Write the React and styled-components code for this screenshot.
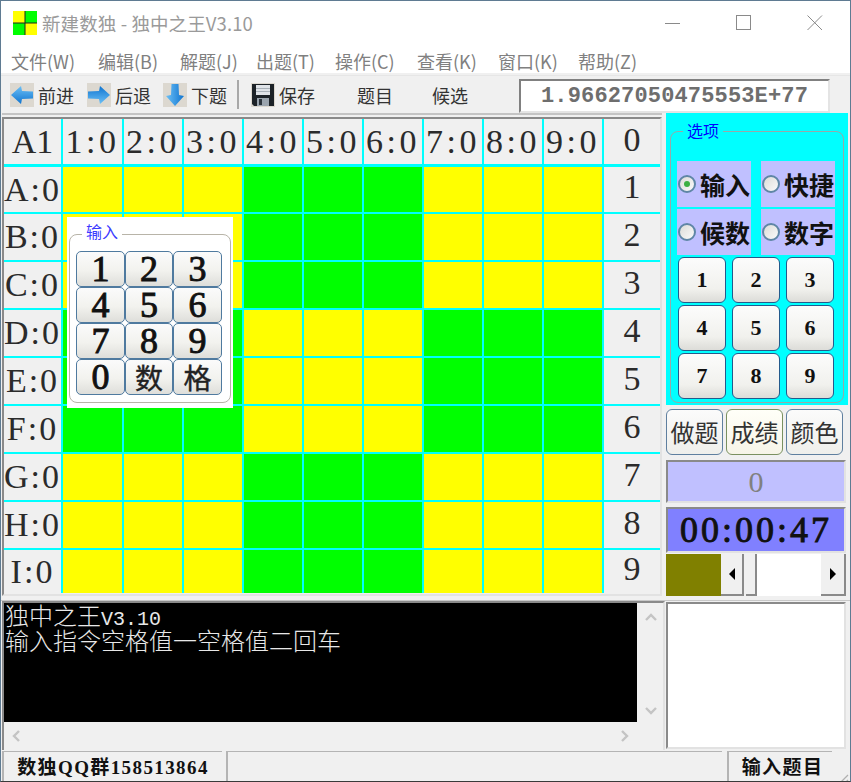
import React from 'react';
import styled, { createGlobalStyle } from 'styled-components';

const SERIF = '"Liberation Serif", "Noto Sans CJK SC", serif';
const SANS = '"Noto Sans CJK SC", "Noto Sans", sans-serif';
const MONO = '"Liberation Mono", "Noto Sans CJK SC", monospace';

const GlobalStyle = createGlobalStyle`
	html, body {
		margin: 0;
		padding: 0;
		background: #f0f0f0;
	}
	* {
		box-sizing: border-box;
	}
`;

const Window = styled.div`
	width: 851px;
	height: 782px;
	display: flex;
	flex-direction: column;
	background: #f0f0f0;
	border: 1px solid #5f7b92;
	border-bottom-color: #3a3a3a;
	overflow: hidden;
	font-family: ${SANS};
`;

const TitleBar = styled.div`
	height: 37px;
	flex: none;
	display: flex;
	align-items: center;
	padding: 7px 0 0 12px;
	background: #fff;
	color: #9a9a9a;
	font-size: 18.5px;
`;

const TitleText = styled.span`
	margin-left: 5px;
	flex: 1;
	line-height: 1;
	letter-spacing: 0.1px;
`;

const WindowButton = styled.div`
	width: 71px;
	height: 30px;
	display: flex;
	align-items: center;
	justify-content: center;
`;

const MenuBar = styled.div`
	height: 35px;
	flex: none;
	display: flex;
	align-items: center;
	background: #fff;
	padding: 10px 0 0 10px;
	color: #808080;
	font-size: 18px;
`;

const MenuItem = styled.span`
	width: ${(props) => props.$w}px;
	flex: none;
	white-space: nowrap;
`;

const ToolBar = styled.div`
	height: 38px;
	margin-top: 2px;
	flex: none;
	display: flex;
	align-items: center;
	padding-left: 9px;
	background: #f0f0f0;
	border-top: 1px solid #e6e6e6;
	font-size: 18px;
	color: #333;
`;

const Tool = styled.div`
	display: flex;
	align-items: center;
	flex: none;
	width: ${(props) => props.$w}px;
	span {
		margin-left: 4px;
		white-space: nowrap;
	}
`;

const ToolSep = styled.div`
	width: 2px;
	height: 29px;
	background: #a8a8a8;
	margin: 0 12px 0 3px;
	flex: none;
`;

const NumberField = styled.div`
	width: 311px;
	height: 34px;
	margin-top: 3px;
	flex: none;
	display: flex;
	align-items: center;
	justify-content: center;
	background: #fff;
	border: 2px solid #808080;
	border-right-color: #e4e4e4;
	border-bottom-color: #e4e4e4;
	color: #6e6e6e;
	font-family: ${MONO};
	font-weight: 700;
	font-size: 22px;
	letter-spacing: 0.15px;
`;

const Main = styled.div`
	height: 487px;
	flex: none;
	display: flex;
	padding-left: 1px;
`;

const SheetColumn = styled.div`
	width: 660px;
	flex: none;
	border-top: 2px solid #c4c4c4;
	padding-top: 2px;
`;

const SheetFrame = styled.div`
	height: 479px;
	position: relative;
	border: 2px solid #8a8a8a;
	border-right-color: #e2e2e2;
	border-bottom-color: #e2e2e2;
`;

const Sheet = styled.div`
	display: grid;
	grid-template-columns: 57px 59px repeat(8, 58px) 56px;
	grid-template-rows: 46px 45px repeat(7, 46px) 43px;
	gap: 2px;
	width: 656px;
	background: #00ffff;
`;

const Cell = styled.div`
	display: flex;
	align-items: center;
	justify-content: center;
	overflow: hidden;
	background: ${(props) => props.$fill || '#f0f0f0'};
	font-family: ${SERIF};
	font-size: 34px;
	line-height: 1;
	color: #2b2b2b;
	letter-spacing: ${(props) => props.$track || 0}px;
	border-bottom: ${(props) => (props.$head ? '1px solid #00ffff' : 'none')};
	padding-bottom: ${(props) => props.$lift || 0}px;
`;

const InputPanel = styled.div`
	position: absolute;
	left: 63px;
	top: 98px;
	width: 166px;
	height: 191px;
	background: #fff;
	padding: 17px 2px 0;
`;

const RoundBox = styled.div`
	position: relative;
	height: ${(props) => props.$h}px;
	border: 1px solid ${(props) => props.$line || '#b8b4a8'};
	border-radius: 8px;
`;

const Legend = styled.span`
	position: absolute;
	left: 12px;
	top: ${(props) => props.$top}px;
	padding: 0 4px;
	background: ${(props) => props.$bg};
	color: ${(props) => props.$color};
	font-size: 16px;
	line-height: 20px;
`;

const BigPad = styled.div`
	display: grid;
	grid-template-columns: 49px 48px 49px;
	grid-auto-rows: 36px;
	margin: 16px 0 0 6px;
`;

const BigKey = styled.div`
	display: flex;
	align-items: center;
	justify-content: center;
	background: linear-gradient(#fbfbfb, #f2f2ee 55%, #dededa);
	border: 1px solid #4f7a9f;
	border-radius: 5px;
	font-family: ${SERIF};
	font-size: 36px;
	-webkit-text-stroke: 0.9px #111;
	color: #111;
	line-height: 1;
	${(props) => props.$cjk && `
		font-family: ${SANS};
		font-size: 28px;
		color: #222;
		-webkit-text-stroke: 0.4px #222;
	`}
`;

const Side = styled.div`
	width: 184px;
	margin-left: 4px;
	flex: none;
	display: flex;
	flex-direction: column;
`;

const OptionPanel = styled.div`
	width: 182px;
	height: 292px;
	flex: none;
	background: #00ffff;
	padding: 18px 4px 0;
`;

const Radios = styled.div`
	display: grid;
	grid-template-columns: 74px 74px;
	grid-auto-rows: 46px;
	column-gap: 10px;
	row-gap: 2px;
	margin: 29px 0 0 6px;
`;

const RadioBlock = styled.div`
	display: flex;
	align-items: center;
	background: #c0c0ff;
	font-size: 25px;
	font-weight: 700;
	color: #111;
	line-height: 1;
	white-space: nowrap;
`;

const RadioDot = styled.span`
	width: 18px;
	height: 18px;
	margin: 0 4px 0 1px;
	flex: none;
	display: flex;
	align-items: center;
	justify-content: center;
	border: 2px solid #5f86a6;
	border-radius: 50%;
	background: linear-gradient(135deg, #dcdcd8, #fafafa);
	&::after {
		content: '';
		width: 6px;
		height: 6px;
		border-radius: 50%;
		background: ${(props) => (props.$on ? '#3cb043' : 'transparent')};
	}
`;

const SmallPad = styled.div`
	display: grid;
	grid-template-columns: repeat(3, 48px);
	grid-auto-rows: 46px;
	column-gap: 6px;
	row-gap: 2px;
	margin: 2px 0 0 7px;
`;

const SmallKey = styled.div`
	display: flex;
	align-items: center;
	justify-content: center;
	background: linear-gradient(#fcfcfc, #f1f1ed 70%, #dcdcd8);
	border: 1px solid #245a8c;
	border-radius: 6px;
	font-family: ${SERIF};
	font-size: 22px;
	font-weight: 700;
	color: #111;
`;

const ActionRow = styled.div`
	display: flex;
	gap: 3px;
	margin-top: 4px;
`;

const ActionButton = styled.div`
	width: 57px;
	height: 46px;
	flex: none;
	display: flex;
	align-items: center;
	justify-content: center;
	background: ${(props) => (props.$focus ? 'linear-gradient(#fffff8, #f6f4e8)' : 'linear-gradient(#fbfbfb, #efefeb)')};
	border: 1px solid ${(props) => (props.$focus ? '#7a9060' : '#5f7f9f')};
	border-radius: 6px;
	font-size: 24px;
	color: #333;
	line-height: 1;
	white-space: nowrap;
`;

const Readout = styled.div`
	width: 180px;
	height: ${(props) => props.$h}px;
	margin-top: ${(props) => props.$top}px;
	flex: none;
	display: flex;
	align-items: center;
	justify-content: center;
	background: ${(props) => props.$bg};
	color: ${(props) => props.$color};
	font-size: ${(props) => props.$size}px;
	font-family: ${SERIF};
	-webkit-text-stroke: ${(props) => props.$stroke || 0}px ${(props) => props.$color};
	border: 2px solid #8a8a8a;
	border-right-color: #e2e2e2;
	border-bottom-color: #e2e2e2;
	letter-spacing: ${(props) => props.$track || 0}px;
`;

const SliderRow = styled.div`
	display: flex;
	height: 42px;
	width: 180px;
	margin-top: 1px;
`;

const Swatch = styled.div`
	width: 55px;
	flex: none;
	background: #808000;
`;

const ScrollTrack = styled.div`
	flex: 1;
	background: #fff;
`;

const ScrollKnob = styled.div`
	width: ${(props) => props.$w}px;
	flex: none;
	display: flex;
	align-items: center;
	justify-content: center;
	background: #f0f0f0;
	border-right: 2px solid #8a8a8a;
	border-bottom: 2px solid #8a8a8a;
	margin-right: ${(props) => props.$gap || 0}px;
`;

const Arrow = styled.span`
	width: 0;
	height: 0;
	border-top: 6px solid transparent;
	border-bottom: 6px solid transparent;
	border-${(props) => (props.$left ? 'right' : 'left')}: 6px solid #000;
`;

const Lower = styled.div`
	height: 150px;
	flex: none;
	display: flex;
	border-top: 1px solid #c8c8c8;
	padding-left: 1px;
`;

const LogFrame = styled.div`
	width: 663px;
	height: 149px;
	flex: none;
	border: 2px solid #8a8a8a;
	border-right-color: #e2e2e2;
	border-bottom: none;
	display: grid;
	grid-template-columns: 633px 27px;
	grid-template-rows: 119px 28px;
`;

const Log = styled.div`
	background: #000;
	color: #e8e8e8;
	font-size: 24px;
	font-weight: 300;
	padding-left: 1px;
	white-space: nowrap;
`;

const LogLine = styled.div`
	height: 25px;
	line-height: 23px;
`;

const LogLatin = styled.span`
	font-family: ${MONO};
	font-size: 20px;
	line-height: 1;
`;

const ScrollColumn = styled.div`
	display: flex;
	flex-direction: column;
	justify-content: space-between;
	align-items: center;
	padding: 8px 0 5px;
`;

const ScrollRow = styled.div`
	display: flex;
	justify-content: space-between;
	align-items: center;
	padding: 0 6px;
`;

const Memo = styled.div`
	width: 180px;
	height: 147px;
	margin: 1px 0 0 1px;
	flex: none;
	background: #fff;
	border: 2px solid #8a8a8a;
	border-right-color: #e2e2e2;
	border-bottom-color: #e2e2e2;
`;

const StatusBar = styled.div`
	flex: 1;
	display: flex;
	position: relative;
	padding: 1px 0 2px 1px;
`;

const StatusPane = styled.div`
	width: ${(props) => props.$w}px;
	margin-left: ${(props) => props.$gap || 0}px;
	padding: 0 0 8px ${(props) => props.$pad || 0}px;
	flex: none;
	display: flex;
	align-items: center;
	justify-content: center;
	border-left: 2px solid #b4b4b4;
	border-top: 1px solid #b4b4b4;
	font-family: ${SERIF};
	font-weight: 700;
	font-size: 19px;
	letter-spacing: 1.4px;
	color: #111;
	white-space: nowrap;
`;

const Grip = styled.svg`
	position: absolute;
	right: 1px;
	bottom: 1px;
`;

const COL_LABELS = ['1:0', '2:0', '3:0', '4:0', '5:0', '6:0', '7:0', '8:0', '9:0'];
const ROW_LABELS = ['A', 'B', 'C', 'D', 'E', 'F', 'G', 'H', 'I'];
const YELLOW = '#ffff00';
const GREEN = '#00ff00';

function boxFill(r, c) {
	const odd = (Math.floor(r / 3) + Math.floor(c / 3)) % 2;
	return odd ? GREEN : YELLOW;
}

function ArrowIcon({ dir }) {
	const turn = { left: 0, right: 180, down: 270 }[dir];
	return (
		<svg width="24" height="24" viewBox="0 0 24 24">
			<rect width="24" height="24" fill="#dcd8d0" />
			<defs>
				<linearGradient id={`a-${dir}`} x1="0" y1="0" x2="0" y2="1">
					<stop offset="0" stopColor="#6cc0f6" />
					<stop offset="1" stopColor="#0f74d0" />
				</linearGradient>
			</defs>
			<path
				transform={`rotate(${turn} 12 12)`}
				d="M1 12 L11 3 L12 8 L23 8.5 L23 15.5 L12 16 L11 21 Z"
				fill={`url(#a-${dir})`}
			/>
		</svg>
	);
}

function SaveIcon() {
	return (
		<svg width="24" height="24" viewBox="0 0 24 24">
			<rect width="24" height="24" fill="#dcd8d0" />
			<path d="M1 1 H23 V23 H3 L1 21 Z" fill="#1c2228" />
			<rect x="5" y="2" width="14" height="10" fill="#dfe3e8" />
			<rect x="5" y="5" width="14" height="1" fill="#a8b0b8" />
			<rect x="5" y="8" width="14" height="1" fill="#a8b0b8" />
			<rect x="6" y="15" width="12" height="8" fill="#9aa4ae" />
			<rect x="8" y="16" width="3" height="6" fill="#2c343c" />
		</svg>
	);
}

function AppIcon() {
	return (
		<svg width="24" height="24" viewBox="0 0 24 24">
			<rect width="12" height="12" fill="#ffff00" />
			<rect x="12" width="12" height="12" fill="#00ff00" />
			<rect y="12" width="12" height="12" fill="#00ff00" />
			<rect x="12" y="12" width="12" height="12" fill="#ffff00" />
			<path d="M0 12 H24 M12 0 V24" stroke="#222" strokeWidth="1" />
		</svg>
	);
}

function Chevron({ dir }) {
	const turn = { up: 0, right: 90, down: 180, left: 270 }[dir];
	return (
		<svg width="12" height="12" viewBox="0 0 12 12">
			<path
				transform={`rotate(${turn} 6 6)`}
				d="M1 9 L6 4 L11 9"
				fill="none"
				stroke="#c4c4c4"
				strokeWidth="2.4"
			/>
		</svg>
	);
}

export default function App() {
	return (
		<Window>
			<GlobalStyle />
			<TitleBar>
				<AppIcon />
				<TitleText>新建数独 - 独中之王V3.10</TitleText>
				<WindowButton>
					<svg width="16" height="16"><path d="M0 8.5 H15" stroke="#8a8a8a" /></svg>
				</WindowButton>
				<WindowButton>
					<svg width="16" height="16"><rect x="0.5" y="0.5" width="14" height="14" fill="none" stroke="#8a8a8a" /></svg>
				</WindowButton>
				<WindowButton>
					<svg width="16" height="16"><path d="M0.5 0.5 L15 15 M15 0.5 L0.5 15" stroke="#8a8a8a" /></svg>
				</WindowButton>
			</TitleBar>
			<MenuBar>
				<MenuItem $w={87}>文件(W)</MenuItem>
				<MenuItem $w={82}>编辑(B)</MenuItem>
				<MenuItem $w={76}>解题(J)</MenuItem>
				<MenuItem $w={79}>出题(T)</MenuItem>
				<MenuItem $w={82}>操作(C)</MenuItem>
				<MenuItem $w={81}>查看(K)</MenuItem>
				<MenuItem $w={80}>窗口(K)</MenuItem>
				<MenuItem $w={70}>帮助(Z)</MenuItem>
			</MenuBar>
			<ToolBar>
				<Tool $w={77}><ArrowIcon dir="left" /><span>前进</span></Tool>
				<Tool $w={76}><ArrowIcon dir="right" /><span>后退</span></Tool>
				<Tool $w={71}><ArrowIcon dir="down" /><span>下题</span></Tool>
				<ToolSep />
				<Tool $w={102}><SaveIcon /><span>保存</span></Tool>
				<Tool $w={75}><span>题目</span></Tool>
				<Tool $w={91}><span>候选</span></Tool>
				<NumberField>1.96627050475553E+77</NumberField>
			</ToolBar>
			<Main>
				<SheetColumn>
					<SheetFrame>
						<Sheet>
							<Cell $head>A1</Cell>
							{COL_LABELS.map((label) => <Cell key={label} $head $track={3.6}>{label}</Cell>)}
							<Cell $head $lift={4}>0</Cell>
							{ROW_LABELS.map((row, r) => (
								<React.Fragment key={row}>
									<Cell $track={2}>{row}:0</Cell>
									{COL_LABELS.map((label, c) => <Cell key={label} $fill={boxFill(r, c)} />)}
									<Cell $lift={5}>{r + 1}</Cell>
								</React.Fragment>
							))}
						</Sheet>
						<InputPanel>
							<RoundBox $h={169}>
								<Legend $top={-14} $bg="#fff" $color="#3a3aff">输入</Legend>
								<BigPad>
									{['1', '2', '3', '4', '5', '6', '7', '8', '9', '0'].map((key) => <BigKey key={key}>{key}</BigKey>)}
									<BigKey $cjk>数</BigKey>
									<BigKey $cjk>格</BigKey>
								</BigPad>
							</RoundBox>
						</InputPanel>
					</SheetFrame>
				</SheetColumn>
				<Side>
					<OptionPanel>
						<RoundBox $h={272} $line="#98a8a8">
							<Legend $top={-12} $bg="#00ffff" $color="#0000ff">选项</Legend>
							<Radios>
								<RadioBlock><RadioDot $on />输入</RadioBlock>
								<RadioBlock><RadioDot />快捷</RadioBlock>
								<RadioBlock><RadioDot />候数</RadioBlock>
								<RadioBlock><RadioDot />数字</RadioBlock>
							</Radios>
							<SmallPad>
								{[1, 2, 3, 4, 5, 6, 7, 8, 9].map((key) => <SmallKey key={key}>{key}</SmallKey>)}
							</SmallPad>
						</RoundBox>
					</OptionPanel>
					<ActionRow>
						<ActionButton>做题</ActionButton>
						<ActionButton $focus>成绩</ActionButton>
						<ActionButton>颜色</ActionButton>
					</ActionRow>
					<Readout $h={43} $top={5} $bg="#c0c0ff" $color="#808080" $size={30}>0</Readout>
					<Readout $h={46} $top={4} $bg="#8080ff" $color="#111" $size={36} $track={3} $stroke={0.9}>00:00:47</Readout>
					<SliderRow>
						<Swatch />
						<ScrollKnob $w={23} $gap={2}><Arrow $left /></ScrollKnob>
						<ScrollKnob $w={11} />
						<ScrollTrack />
						<ScrollKnob $w={25}><Arrow /></ScrollKnob>
					</SliderRow>
				</Side>
			</Main>
			<Lower>
				<LogFrame>
					<Log>
						<LogLine>独中之王<LogLatin>V3.10</LogLatin></LogLine>
						<LogLine>输入指令空格值一空格值二回车</LogLine>
					</Log>
					<ScrollColumn>
						<Chevron dir="up" />
						<Chevron dir="down" />
					</ScrollColumn>
					<ScrollRow>
						<Chevron dir="left" />
						<Chevron dir="right" />
					</ScrollRow>
				</LogFrame>
				<Memo />
			</Lower>
			<StatusBar>
				<StatusPane $w={220}>数独QQ群158513864</StatusPane>
				<StatusPane $w={496} $gap={4} />
				<StatusPane $w={105} $gap={5} $pad={4}>输入题目</StatusPane>
				<Grip width="16" height="16" viewBox="0 0 16 16">
					<path d="M15 3 L3 15 M15 8 L8 15 M15 13 L13 15" stroke="#b0b0b0" strokeWidth="1.3" />
				</Grip>
			</StatusBar>
		</Window>
	);
}
